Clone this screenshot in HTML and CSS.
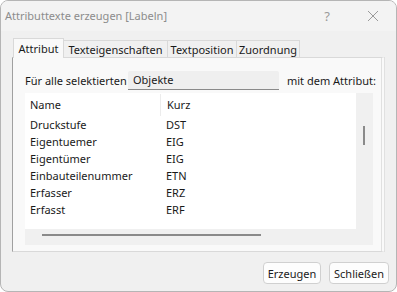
FILE: index.html
```html
<!DOCTYPE html>
<html>
<head>
<meta charset="utf-8">
<link rel="stylesheet" href="styles.css">
</head>
<body>
<div class="window">
  <div class="titlebar">
    <span class="title">Attributtexte erzeugen [Labeln]</span>
    <span class="help">?</span>
    <span class="close">
      <svg width="12" height="12" viewBox="0 0 12 12"><path d="M1 1L11 11M11 1L1 11" stroke="#9a9a9a" stroke-width="1" fill="none"/></svg>
    </span>
  </div>
  <div class="tabs">
    <div class="tab active t1">Attribut</div>
    <div class="tab t2">Texteigenschaften</div>
    <div class="tab t3">Textposition</div>
    <div class="tab t4">Zuordnung</div>
  </div>
  <div class="panel">
    <div class="filter">
      <span class="lbl">Für alle selektierten</span>
      <div class="combo">Objekte</div>
      <span class="lbl2">mit dem Attribut:</span>
    </div>
    <div class="list">
      <div class="list-main">
        <div class="rows">
          <div class="row head"><span class="c1">Name</span><span class="c2">Kurz</span></div>
          <div class="row"><span class="c1">Druckstufe</span><span class="c2">DST</span></div>
          <div class="row"><span class="c1">Eigentuemer</span><span class="c2">EIG</span></div>
          <div class="row"><span class="c1">Eigentümer</span><span class="c2">EIG</span></div>
          <div class="row"><span class="c1">Einbauteilenummer</span><span class="c2">ETN</span></div>
          <div class="row"><span class="c1">Erfasser</span><span class="c2">ERZ</span></div>
          <div class="row"><span class="c1">Erfasst</span><span class="c2">ERF</span></div>
        </div>
        <div class="vscroll"><div class="vthumb"></div></div>
      </div>
      <div class="hscroll"><div class="hthumb"></div></div>
    </div>
  </div>
  <div class="buttons">
    <div class="btn b1">Erzeugen</div>
    <div class="btn b2">Schließen</div>
  </div>
</div>
</body>
</html>
```
FILE: styles.css
```css
html, body {
  margin: 0;
  padding: 0;
  background: #ffffff;
}
body {
  font-family: "Noto Sans", "Open Sans", sans-serif;
  font-size: 11px;
  color: #1a1a1a;
  white-space: nowrap;
}
.window {
  width: 395px;
  height: 290px;
  border: 1px solid #b5b5b5;
  border-radius: 8px;
  background: #f0f0f0;
  overflow: hidden;
  display: flex;
  flex-direction: column;
}
.titlebar {
  height: 30px;
  display: flex;
  align-items: center;
  padding-left: 4px;
  background: #f3f3f3;
}
.title {
  color: #8c8c8c;
  font-size: 11px;
  flex: 1;
  padding-bottom: 2px;
}
.help {
  color: #9a9a9a;
  font-size: 13px;
  width: 46px;
  text-align: center;
  padding-left: 3px;
}
.close {
  width: 46px;
  display: flex;
  justify-content: center;
}
.tabs {
  display: flex;
  margin-left: 13px;
  margin-top: 8px;
  height: 18px;
  align-items: flex-end;
  position: relative;
  z-index: 1;
}
.tab {
  height: 17px;
  line-height: 17px;
  box-sizing: border-box;
  text-align: center;
  border: 1px solid #d9d9d9;
  border-bottom: none;
  background: #f0f0f0;
  margin-right: -1px;
}
.tab.active {
  height: 20px;
  line-height: 19px;
  margin-left: -1px;
  background: #f9f9f9;
  margin-bottom: -1px;
}
.t1 { width: 51px; }
.t2 { width: 105px; }
.t3 { width: 70px; }
.t4 { width: 64px; }
.panel {
  margin: 0 11px 0 11px;
  height: 195px;
  background: #f9f9f9;
  border: 1px solid #d9d9d9;
  border-left: 1px solid #a0a0a0;
  border-right: 4px double #e0e0e0;
  box-sizing: border-box;
  padding: 12px 0 0 12px;
}
.filter {
  display: flex;
  align-items: center;
  height: 20px;
}
.lbl, .combo, .lbl2 {
  flex-shrink: 0;
}
.lbl {
  width: 103px;
}
.combo {
  width: 151px;
  height: 19px;
  box-sizing: border-box;
  background: #efefef;
  border-bottom: 1px solid #8a8a8a;
  border-radius: 2px 2px 0 0;
  padding-left: 5px;
  line-height: 18px;
}
.lbl2 {
  margin-left: 8px;
}
.list {
  margin-top: 3px;
  width: 348px;
  height: 152px;
  background: #f0f0f0;
  display: flex;
  flex-direction: column;
}
.list-main {
  display: flex;
  height: 136px;
}
.rows {
  flex: 1;
  background: #ffffff;
  padding-top: 1px;
}
.row {
  display: flex;
  height: 17px;
  line-height: 17px;
}
.row.head {
  height: 22px;
  line-height: 22px;
}
.c1 {
  width: 130px;
  padding-left: 5px;
}
.c2 {
  padding-left: 6px;
}
.row.head .c2 {
  border-left: 1px solid #ececec;
}
.vscroll {
  width: 17px;
  background: #f0f0f0;
  position: relative;
}
.vthumb {
  position: absolute;
  left: 7px;
  top: 33px;
  width: 2px;
  height: 19px;
  background: #8a8a8a;
}
.hscroll {
  height: 16px;
  position: relative;
}
.hthumb {
  position: absolute;
  left: 17px;
  top: 5px;
  width: 219px;
  height: 2px;
  background: #8a8a8a;
}
.buttons {
  display: flex;
  justify-content: flex-end;
  gap: 8px;
  margin-top: 10px;
  padding-right: 7px;
}
.btn {
  height: 22px;
  line-height: 21px;
  box-sizing: border-box;
  text-align: center;
  background: #fdfdfd;
  border: 1px solid #d0d0d0;
  border-radius: 4px;
}
.b1 { width: 58px; }
.b2 { width: 60px; }
```
